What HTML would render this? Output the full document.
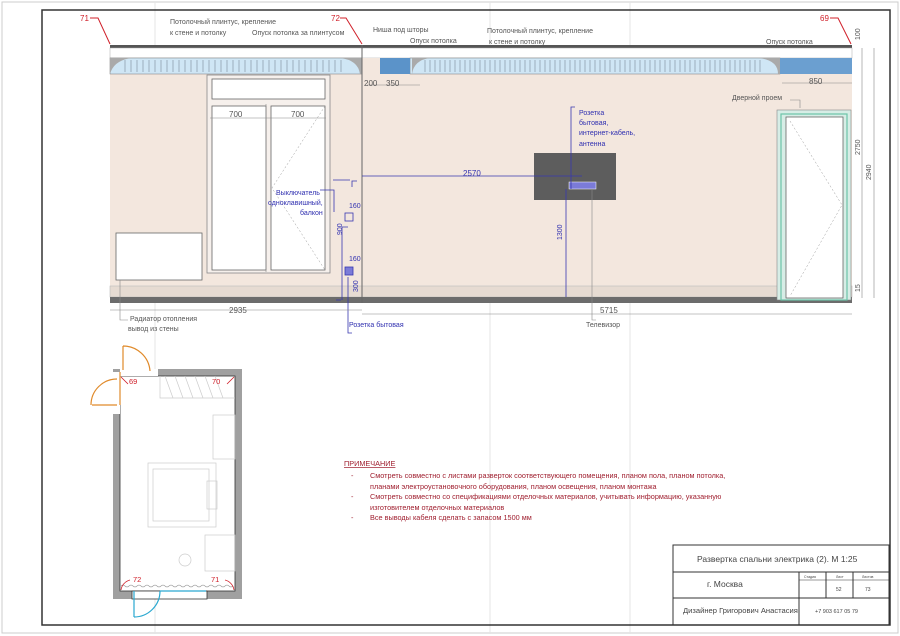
<!DOCTYPE html>
<html><head><meta charset="utf-8"><style>
html,body{margin:0;padding:0;background:#fff}
svg{display:block}
text{font-family:"Liberation Sans","DejaVu Sans",sans-serif}
</style></head><body>
<svg width="900" height="636" viewBox="0 0 900 636" xmlns="http://www.w3.org/2000/svg">
<rect x="0" y="0" width="900" height="636" fill="#fff"/>
<rect x="2" y="2" width="896" height="631" fill="none" stroke="#ccc" stroke-width="1"/>
<g stroke="#e4e4e4" stroke-width="1">
<line x1="155" y1="2" x2="155" y2="634"/><line x1="490" y1="2" x2="490" y2="634"/><line x1="630" y1="2" x2="630" y2="634"/>
</g>
<rect x="42" y="10" width="848" height="615" fill="none" stroke="#333" stroke-width="1.5"/>

<rect x="110" y="74" width="742" height="224" fill="#f3e7de"/>
<rect x="110" y="286" width="742" height="11" fill="#e6dbd2" stroke="#bbb" stroke-width="0.6"/>
<rect x="110" y="297" width="742" height="6" fill="#6c6c6c"/>
<rect x="110" y="45" width="742" height="3" fill="#555"/>
<rect x="110" y="48" width="742" height="10" fill="#fff" stroke="#aaa" stroke-width="0.5"/>
<rect x="110" y="58" width="252" height="16" fill="#cfe6f5" stroke="#777" stroke-width="0.5"/>
<rect x="410" y="58" width="370" height="16" fill="#cfe6f5" stroke="#777" stroke-width="0.5"/>
<g stroke="#7a8a98" stroke-width="0.6">
<path d="M125 60v12M131 60v12M137 60v12M143 60v12M149 60v12M155 60v12M161 60v12M167 60v12M173 60v12M179 60v12M185 60v12M191 60v12M197 60v12M203 60v12M209 60v12M215 60v12M221 60v12M227 60v12M233 60v12M239 60v12M245 60v12M251 60v12M257 60v12M263 60v12M269 60v12M275 60v12M281 60v12M287 60v12M293 60v12M299 60v12M305 60v12M311 60v12M317 60v12M323 60v12M329 60v12M335 60v12M341 60v12"/>
<path d="M425 60v12M430 60v12M435 60v12M440 60v12M445 60v12M450 60v12M455 60v12M460 60v12M465 60v12M470 60v12M475 60v12M480 60v12M485 60v12M490 60v12M495 60v12M500 60v12M505 60v12M510 60v12M515 60v12M520 60v12M525 60v12M530 60v12M535 60v12M540 60v12M545 60v12M550 60v12M555 60v12M560 60v12M565 60v12M570 60v12M575 60v12M580 60v12M585 60v12M590 60v12M595 60v12M600 60v12M605 60v12M610 60v12M615 60v12M620 60v12M625 60v12M630 60v12M635 60v12M640 60v12M645 60v12M650 60v12M655 60v12M660 60v12M665 60v12M670 60v12M675 60v12M680 60v12M685 60v12M690 60v12M695 60v12M700 60v12M705 60v12M710 60v12M715 60v12M720 60v12M725 60v12M730 60v12M735 60v12M740 60v12M745 60v12M750 60v12M755 60v12M760 60v12"/>
</g>
<path d="M110 58h22q-18 2-22 16z" fill="#aaa"/>
<path d="M362 58h-22q18 2 20 16h2z" fill="#aaa"/>
<path d="M412 58h18q-16 2-18 16z" fill="#aaa"/>
<path d="M780 58h-22q20 2 20 16h2z" fill="#aaa"/>
<rect x="362" y="58" width="18" height="16" fill="#f3e7de"/>
<rect x="380" y="58" width="30" height="16" fill="#5b93c9"/>
<rect x="780" y="58" width="72" height="16" fill="#6b9fd0"/>
<line x1="362" y1="45" x2="362" y2="303" stroke="#666" stroke-width="1"/>

<rect x="207" y="75" width="123" height="198" fill="#f6f0ec" stroke="#888" stroke-width="0.8"/>
<rect x="212" y="79" width="113" height="20" fill="#fff" stroke="#666" stroke-width="0.8"/>
<rect x="212" y="106" width="54" height="164" fill="#fff" stroke="#666" stroke-width="0.8"/>
<rect x="271" y="106" width="54" height="164" fill="#fff" stroke="#666" stroke-width="0.8"/>
<line x1="266" y1="104" x2="266" y2="272" stroke="#888" stroke-width="0.6"/>
<path d="M325 106L272 188L325 270" fill="none" stroke="#999" stroke-width="0.5" stroke-dasharray="2,2"/>
<rect x="116" y="233" width="86" height="47" fill="#fff" stroke="#666" stroke-width="0.8"/>
<rect x="534" y="153" width="82" height="47" fill="#5d5d5d"/>
<rect x="569" y="182" width="27" height="7" fill="#7b7bd8" stroke="#fff" stroke-width="0.5"/>
<rect x="777" y="110" width="74" height="190" fill="#d7ede6" stroke="#888" stroke-width="0.6"/>
<rect x="781" y="114" width="66" height="186" fill="none" stroke="#6cc4a8" stroke-width="1.2"/>
<rect x="786" y="117" width="57" height="181" fill="#fff" stroke="#666" stroke-width="0.8"/>
<path d="M790 121L842 205L790 296" fill="none" stroke="#999" stroke-width="0.5" stroke-dasharray="2,2"/>

<g stroke="#3838b0" fill="none" stroke-width="0.8">
<rect x="345" y="213" width="8" height="8"/>
<rect x="345" y="267" width="8" height="8" fill="#7b7bd8"/>
<path d="M357 181h-5v6M350 180h-17"/>
<path d="M320 190h14v22" />
<path d="M342 300V227h6M341 300h-5"/>
<path d="M362 176h220M566 189v108"/>
<path d="M575 107h-4v82"/>
<path d="M348 277v56h4"/>
</g>
<g stroke="#888" fill="none" stroke-width="0.6">
<path d="M110 310h252M362 314h490M120 280v40h8"/>
<path d="M592 190v130h4"/>
<path d="M862 48v250M874 48v250"/>
<path d="M367 85h53M230 118h96M210 118h56"/>
<path d="M790 100h10v8"/>
<path d="M782 83h70"/>
</g>
<g stroke="#d0202a" fill="none" stroke-width="1">
<path d="M90 18h8l12 26"/><path d="M340 18h6l16 26"/><path d="M830 18h8l13 26"/>
</g>
<g fill="#d0202a" font-size="8">
<text x="80" y="21">71</text><text x="331" y="21">72</text><text x="820" y="21">69</text>
</g>
<g fill="#555" font-size="7">
<text x="170" y="24">Потолочный плинтус, крепление</text>
<text x="170" y="35">к стене и потолку</text>
<text x="252" y="35">Опуск потолка за плинтусом</text>
<text x="373" y="32">Ниша под шторы</text>
<text x="410" y="43">Опуск потолка</text>
<text x="487" y="33">Потолочный плинтус, крепление</text>
<text x="489" y="44">к стене и потолку</text>
<text x="766" y="44">Опуск потолка</text>
<text x="732" y="100">Дверной проем</text>
<text x="229" y="117" font-size="8">700</text><text x="291" y="117" font-size="8">700</text>
<text x="364" y="86" font-size="8">200</text><text x="386" y="86" font-size="8">350</text>
<text x="809" y="84" font-size="8">850</text>
<text x="229" y="313" font-size="8">2935</text><text x="600" y="313" font-size="8">5715</text>
<text x="130" y="321">Радиатор отопления</text>
<text x="128" y="331">вывод из стены</text>
<text x="586" y="327">Телевизор</text>
</g>
<g fill="#555" font-size="7">
<text transform="translate(860,40) rotate(-90)">100</text>
<text transform="translate(860,155) rotate(-90)">2750</text>
<text transform="translate(871,180) rotate(-90)">2940</text>
<text transform="translate(860,292) rotate(-90)">15</text>
</g>
<g fill="#3030b0" font-size="7">
<text x="579" y="115">Розетка</text><text x="579" y="125">бытовая,</text>
<text x="579" y="135">интернет-кабель,</text><text x="579" y="146">антенна</text>
<text x="276" y="195">Выключатель</text><text x="268" y="205">одноклавишный,</text><text x="300" y="215">балкон</text>
<text x="349" y="327">Розетка бытовая</text>
<text x="463" y="176" font-size="8">2570</text>
<text x="349" y="208">160</text><text x="349" y="261">160</text>
<text transform="translate(342,235) rotate(-90)">900</text>
<text transform="translate(358,292) rotate(-90)">300</text>
<text transform="translate(562,240) rotate(-90)">1300</text>
</g>

<rect x="113" y="369" width="129" height="230" fill="#a0a0a0"/>
<rect x="120" y="376" width="115" height="215" fill="#fff" stroke="#333" stroke-width="0.8"/>
<rect x="113" y="372" width="7" height="42" fill="#fff"/>
<rect x="120" y="369" width="38" height="7" fill="#fff"/>
<rect x="132" y="591" width="75" height="8" fill="#fff" stroke="#333" stroke-width="0.8"/>
<g fill="none" stroke="#e08a2a" stroke-width="1.2">
<path d="M123 346v24M123 346a27 27 0 0 1 27 25"/>
<path d="M117 405h-25M91 405a26 26 0 0 1 26 -26"/>
<path d="M120 372v33"/>
</g>
<g fill="none" stroke="#2aa8d0" stroke-width="1.2">
<path d="M134 591v26M134 617a26 26 0 0 0 26 -26M160 591h46"/>
</g>
<g fill="none" stroke="#ccc" stroke-width="0.7">
<rect x="148" y="463" width="68" height="64"/><rect x="153" y="469" width="56" height="52"/>
<rect x="207" y="481" width="10" height="28"/><rect x="213" y="415" width="22" height="44"/>
<rect x="205" y="535" width="30" height="36"/><circle cx="185" cy="560" r="6"/>
<path d="M160 376v22h75M165 376l8 22M175 376l8 22M185 376l8 22M195 376l8 22M205 376l8 22M215 376l8 22"/>
</g>
<path d="M121 586 q2 -2 4 0t4 0t4 0t4 0t4 0t4 0t4 0t4 0t4 0t4 0t4 0t4 0t4 0t4 0t4 0t4 0t4 0t4 0t4 0t4 0t4 0t4 0t4 0t4 0t4 0t4 0t4 0t4 0" fill="none" stroke="#999" stroke-width="0.6"/>
<g fill="#d0202a" font-size="7.5">
<text x="129" y="384">69</text><text x="212" y="384">70</text>
<text x="133" y="582">72</text><text x="211" y="582">71</text>
</g>
<g stroke="#d0202a" fill="none" stroke-width="0.8">
<path d="M121 377l7 7M234 377l-7 7M121 590a12 12 0 0 1 9 -10M234 590a12 12 0 0 0 -9 -10"/>
</g>

<g fill="#a02030" font-size="7.3">
<text x="344" y="466" text-decoration="underline">ПРИМЕЧАНИЕ</text>
<text x="351" y="478">-</text><text x="370" y="478">Смотреть совместно с листами разверток соответствующего помещения, планом пола, планом потолка,</text>
<text x="370" y="489">планами электроустановочного оборудования, планом освещения, планом монтажа</text>
<text x="351" y="499">-</text><text x="370" y="499">Смотреть совместно со спецификациями отделочных материалов, учитывать информацию, указанную</text>
<text x="370" y="510">изготовителем отделочных материалов</text>
<text x="351" y="520">-</text><text x="370" y="520">Все выводы кабеля сделать с запасом 1500 мм</text>
</g>

<g fill="none" stroke="#333" stroke-width="1">
<rect x="673" y="545" width="216" height="80"/>
<line x1="673" y1="572" x2="889" y2="572"/>
<line x1="673" y1="598" x2="889" y2="598"/>
<line x1="799" y1="572" x2="799" y2="625"/>
<line x1="826" y1="572" x2="826" y2="598"/><line x1="853" y1="572" x2="853" y2="598"/>
<line x1="799" y1="580" x2="889" y2="580" stroke-width="0.6"/>
</g>
<g fill="#444">
<text x="697" y="562" font-size="8.5">Развертка спальни электрика (2). М 1:25</text>
<text x="707" y="587" font-size="8.5">г. Москва</text>
<text x="683" y="613" font-size="7.6">Дизайнер Григорович Анастасия</text>
<text x="815" y="613" font-size="5.5">+7 903 617 05 79</text>
<text x="804" y="578" font-size="3.5">Стадия</text><text x="836" y="578" font-size="3.5">Лист</text><text x="862" y="578" font-size="3.5">Листов</text>
<text x="836" y="591" font-size="5">52</text><text x="865" y="591" font-size="5">73</text>
</g>
</svg>
</body></html>
